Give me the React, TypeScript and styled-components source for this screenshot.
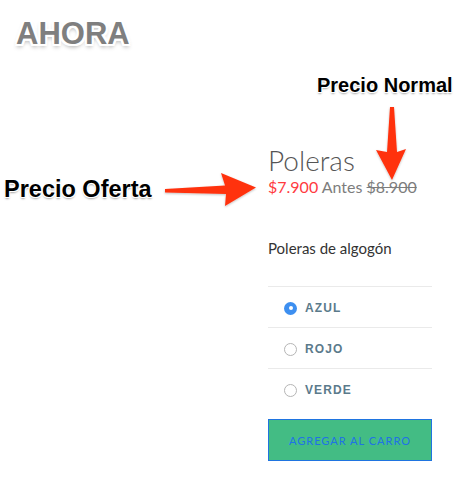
import React from "react";
import styled, { createGlobalStyle } from "styled-components";

const Global = createGlobalStyle`
  html, body { margin: 0; padding: 0; background: #fff; }
  body { font-family: "Lato", "Liberation Sans", sans-serif; }
`;

const Page = styled.div`
  position: relative;
  width: 470px;
  height: 480px;
  overflow: hidden;
  background: #fff;
`;

const Product = styled.div`
  display: flex;
  flex-direction: column;
  width: 164px;
  margin-left: 268px;
  padding-top: 144px;
`;

const Title = styled.h1`
  margin: 0;
  font-family: "Lato", sans-serif;
  font-weight: 300;
  font-size: 28px;
  line-height: 32px;
  color: #555;
`;

const PriceLine = styled.div`
  font-family: "Lato", sans-serif;
  font-size: 16px;
  line-height: 22px;
  color: #7d7d7d;
  white-space: nowrap;
`;

const Sale = styled.span`
  color: #ff3b3f;
`;

const Old = styled.span`
  text-decoration: line-through;
`;

const Description = styled.p`
  margin: 40px 0 0;
  font-family: "Lato", sans-serif;
  font-size: 15px;
  line-height: 20px;
  color: #333;
`;

const Options = styled.ul`
  list-style: none;
  margin: 28px 0 0;
  padding: 0;
`;

const Option = styled.li`
  display: flex;
  align-items: center;
  gap: 8px;
  height: 41px;
  padding: 2px 0 0 16px;
  box-sizing: border-box;
  border-top: 1px solid #eaeaea;
`;

const Radio = styled.span<{ $checked?: boolean }>`
  width: 13px;
  height: 13px;
  box-sizing: border-box;
  border-radius: 50%;
  border: ${(p) => (p.$checked ? "none" : "1px solid #b5b5b5")};
  background: ${(p) => (p.$checked ? "#3d8ff0" : "#fff")};
  display: flex;
  align-items: center;
  justify-content: center;
  &::after {
    content: "";
    display: ${(p) => (p.$checked ? "block" : "none")};
    width: 4px;
    height: 4px;
    border-radius: 50%;
    background: #fff;
  }
`;

const OptionLabel = styled.span`
  font-family: "Liberation Sans", Arial, sans-serif;
  font-weight: 700;
  font-size: 12px;
  letter-spacing: 1.1px;
  color: #5b7a8b;
`;

const AddButton = styled.button`
  margin-top: 10px;
  width: 164px;
  height: 42px;
  box-sizing: border-box;
  border: 1px solid #1f74e0;
  background: #43bc84;
  color: #1f72e6;
  font-family: "Lato", sans-serif;
  font-size: 11px;
  letter-spacing: 1px;
  text-transform: uppercase;
  padding: 0;
`;

const Annotation = styled.div<{ $size: number; $left: number; $top: number }>`
  position: absolute;
  left: ${(p) => p.$left}px;
  top: ${(p) => p.$top}px;
  font-family: "Liberation Sans", Arial, sans-serif;
  font-weight: 700;
  font-size: ${(p) => p.$size}px;
  line-height: ${(p) => p.$size}px;
  color: #000;
  white-space: nowrap;
  text-shadow: -1px -1px 0 #fff, 1px -1px 0 #fff, -1px 1px 0 #fff, 1px 1px 0 #fff,
    0 2px 2px rgba(0, 0, 0, 0.35);
`;

const Headline = styled.div`
  position: absolute;
  left: 16px;
  top: 18px;
  font-family: "Liberation Sans", Arial, sans-serif;
  font-weight: 700;
  font-size: 31px;
  line-height: 31px;
  color: #7f7f7f;
  text-shadow: -2px -2px 0 #fff, 2px -2px 0 #fff, -2px 2px 0 #fff, 2px 2px 0 #fff,
    0 2px 0 #fff, 0 -2px 0 #fff, 2px 0 0 #fff, -2px 0 0 #fff, 0 3px 4px rgba(0, 0, 0, 0.35);
`;

const Arrows = styled.svg`
  position: absolute;
  left: 0;
  top: 0;
  pointer-events: none;
`;

export default function App() {
  return (
    <>
      <Global />
      <Page>
        <Product>
          <Title>Poleras</Title>
          <PriceLine>
            <Sale>$7.900</Sale> Antes <Old>$8.900</Old>
          </PriceLine>
          <Description>Poleras de algogón</Description>
          <Options>
            <Option>
              <Radio $checked />
              <OptionLabel>AZUL</OptionLabel>
            </Option>
            <Option>
              <Radio />
              <OptionLabel>ROJO</OptionLabel>
            </Option>
            <Option>
              <Radio />
              <OptionLabel>VERDE</OptionLabel>
            </Option>
          </Options>
          <AddButton>Agregar al carro</AddButton>
        </Product>

        <Headline>AHORA</Headline>
        <Annotation $size={20} $left={317} $top={75}>
          Precio Normal
        </Annotation>
        <Annotation $size={23.5} $left={4} $top={178}>
          Precio Oferta
        </Annotation>

        <Arrows width="470" height="480" viewBox="0 0 470 480">
          <defs>
            <filter id="sh" x="-20%" y="-20%" width="140%" height="140%">
              <feDropShadow dx="0" dy="1" stdDeviation="0.8" floodColor="#000" floodOpacity="0.25" />
            </filter>
          </defs>
          <polygon
            filter="url(#sh)"
            fill="#ff3210"
            points="165,189 225,185.5 221,173 256,187.5 225,206 226,194 165,192.5"
          />
          <polygon
            filter="url(#sh)"
            fill="#ff3210"
            points="390,107 394,107 397,152 406,149 392,180 376,150 387,152"
          />
        </Arrows>
      </Page>
    </>
  );
}
